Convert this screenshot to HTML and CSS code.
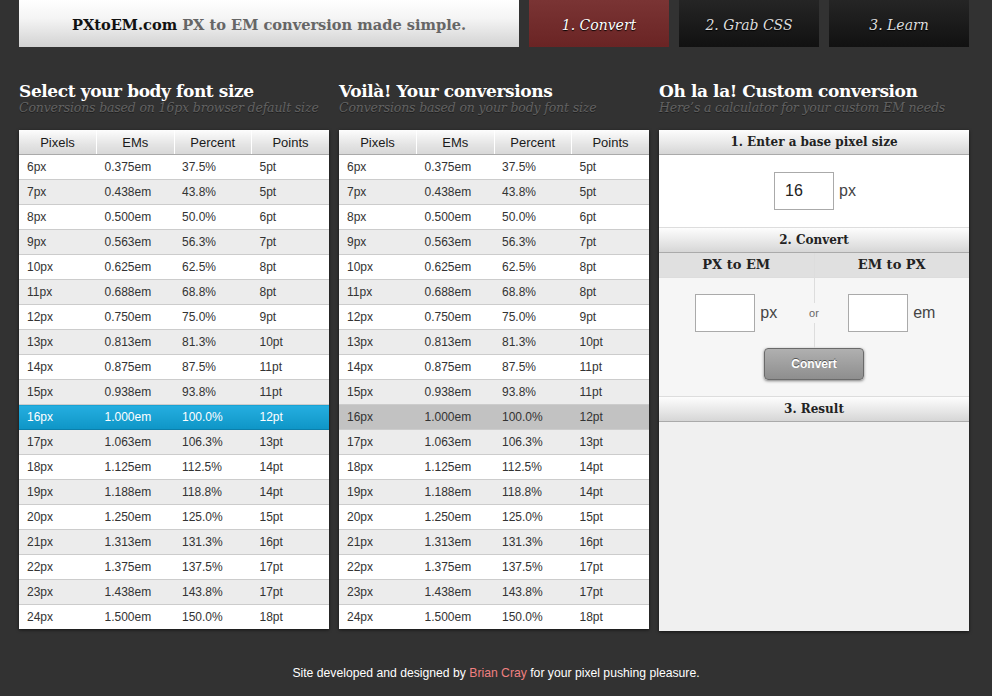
FILE: index.html
```html
<!DOCTYPE html>
<html>
<head>
<meta charset="utf-8">
<link rel="stylesheet" href="styles.css">
</head>
<body>
<div class="page">
  <div class="top">
    <div class="logo"><b>PXtoEM.com</b> <span>PX to EM conversion made simple.</span></div>
    <div class="tab active">1. Convert</div>
    <div class="tab">2. Grab CSS</div>
    <div class="tab">3. Learn</div>
  </div>
  <div class="cols">
    <div class="col">
      <h2>Select your body font size</h2>
      <p class="sub">Conversions based on 16px browser default size</p>
      <table class="conv">
        <thead><tr><th>Pixels</th><th>EMs</th><th>Percent</th><th>Points</th></tr></thead>
        <tbody id="t1"></tbody>
      </table>
    </div>
    <div class="col">
      <h2>Voilà! Your conversions</h2>
      <p class="sub">Conversions based on your body font size</p>
      <table class="conv">
        <thead><tr><th>Pixels</th><th>EMs</th><th>Percent</th><th>Points</th></tr></thead>
        <tbody id="t2"></tbody>
      </table>
    </div>
    <div class="col">
      <h2>Oh la la! Custom conversion</h2>
      <p class="sub">Here’s a calculator for your custom EM needs</p>
      <div class="calc">
        <div class="sec-h">1. Enter a base pixel size</div>
        <div class="base"><span class="inp big">16</span><span class="unit">px</span></div>
        <div class="sec-h">2. Convert</div>
        <div class="conv-area">
          <div class="halves">
            <div class="half">
              <div class="half-h">PX to EM</div>
              <div class="half-b"><span class="inp"></span><span class="unit">px</span></div>
            </div>
            <div class="half right">
              <div class="half-h">EM to PX</div>
              <div class="half-b"><span class="inp"></span><span class="unit">em</span></div>
            </div>
            <span class="or">or</span>
          </div>
          <div class="btn-row"><span class="btn">Convert</span></div>
        </div>
        <div class="sec-h">3. Result</div>
        <div class="result"></div>
      </div>
    </div>
  </div>
  <div class="footer">Site developed and designed by <a>Brian Cray</a> for your pixel pushing pleasure.</div>
</div>
<script src="app.js"></script>
</body>
</html>
```
FILE: app.js
```js
const rows = [
 ["6px","0.375em","37.5%","5pt"],["7px","0.438em","43.8%","5pt"],["8px","0.500em","50.0%","6pt"],
 ["9px","0.563em","56.3%","7pt"],["10px","0.625em","62.5%","8pt"],["11px","0.688em","68.8%","8pt"],
 ["12px","0.750em","75.0%","9pt"],["13px","0.813em","81.3%","10pt"],["14px","0.875em","87.5%","11pt"],
 ["15px","0.938em","93.8%","11pt"],["16px","1.000em","100.0%","12pt"],["17px","1.063em","106.3%","13pt"],
 ["18px","1.125em","112.5%","14pt"],["19px","1.188em","118.8%","14pt"],["20px","1.250em","125.0%","15pt"],
 ["21px","1.313em","131.3%","16pt"],["22px","1.375em","137.5%","17pt"],["23px","1.438em","143.8%","17pt"],
 ["24px","1.500em","150.0%","18pt"]
];
function fill(id, cls){
  const tb = document.getElementById(id);
  tb.innerHTML = rows.map(r => '<tr' + (r[0]==="16px" ? ' class="'+cls+'"' : '') + '>' + r.map(c => '<td>'+c+'</td>').join('') + '</tr>').join('');
}
fill('t1','sel');
fill('t2','cur');
```
FILE: styles.css
```css
html, body { margin: 0; padding: 0; }
body { background: #323232; font-family: "Liberation Sans", Arial, sans-serif; color: #333; }
.page { width: 950px; margin-left: 19px; }
.top { display: flex; gap: 10px; height: 47px; }
.logo {
  width: 500px; display: flex; align-items: center; justify-content: center; gap: 5px;
  background: linear-gradient(#ffffff, #f4f4f4 40%, #d2d2d2);
  font-family: "DejaVu Serif", Georgia, serif; font-size: 14.6px; font-weight: bold;
  padding-top: 2px; box-sizing: border-box;
}
.logo b { color: #111; }
.logo span { color: #666; }
.tab {
  width: 140px; display: flex; align-items: center; justify-content: center;
  background: linear-gradient(#252525, #111);
  color: #ddd; font-family: "DejaVu Serif", Georgia, serif; font-style: italic; font-size: 14px;
  text-shadow: 0 1px 1px #000; padding-top: 2px; box-sizing: border-box;
}
.tab.active { background: linear-gradient(#7a3434, #6a2424); color: #fff; }
.cols { display: flex; gap: 10px; margin-top: 34px; }
.col { width: 310px; }
h2 {
  margin: 0; font-family: "DejaVu Serif", Georgia, serif; font-weight: bold; font-size: 17px;
  color: #fff; line-height: 20px; letter-spacing: -0.4px;
}
.sub {
  margin: 0; font-family: "DejaVu Serif", Georgia, serif; font-style: italic; font-size: 12.5px;
  color: #626262; line-height: 14px; text-shadow: 0 1px 0 #1e1e1e; letter-spacing: -0.15px;
}
.conv {
  margin-top: 15px; width: 310px; border-collapse: collapse; table-layout: fixed;
  box-shadow: 0 1px 3px rgba(0,0,0,0.6); font-size: 12px;
}
.conv th {
  height: 24px; padding: 0; font-weight: normal; font-size: 13px; color: #1a1a1a;
  background: linear-gradient(#fdfdfd, #e4e4e4 60%, #d8d8d8);
  border-left: 1px solid #c8c8c8; border-right: 1px solid #fff; border-bottom: 1px solid #aaa;
}
.conv th:first-child { border-left: none; }
.conv th:last-child { border-right: none; }
.conv td {
  height: 24px; padding: 0 0 0 8px; color: #333; border-bottom: 1px solid #ccc;
}
.conv tbody tr:nth-child(odd) td { background: #fff; }
.conv tbody tr:nth-child(even) td { background: #ececec; }
.conv tbody tr:last-child td { border-bottom: none; }
.conv tbody tr.sel td { background: linear-gradient(#25aee0, #0e95c6); color: #fff; border-bottom-color: #0b7fab; }
.conv tbody tr.cur td { background: #c2c2c2; }
.calc {
  margin-top: 15px; height: 501px; background: #f6f6f6; box-shadow: 0 1px 3px rgba(0,0,0,0.6);
  display: flex; flex-direction: column;
}
.sec-h {
  height: 24px; line-height: 24px; text-align: center; font-family: "DejaVu Serif", Georgia, serif;
  font-weight: bold; font-size: 12px; color: #222;
  background: linear-gradient(#fdfdfd, #e6e6e6 60%, #d6d6d6);
  border-bottom: 1px solid #aaa; border-top: 1px solid #ddd;
}
.sec-h:first-child { border-top: none; }
.base {
  height: 72px; background: #fff; display: flex; align-items: center; justify-content: center; gap: 5px;
  padding-left: 2px;
}
.inp {
  display: inline-block; width: 58px; height: 36px; border: 1px solid #aaa; background: #fff;
  font-size: 16px; line-height: 36px; padding-left: 0; color: #222; text-indent: 10px;
}
.unit { font-size: 16px; color: #444; }
.conv-area { position: relative; height: 143px; background: #f6f6f6; }
.halves { display: flex; position: relative; }
.half { flex: 1; }
.half.right { border-left: 1px solid #ddd; }
.half-h {
  height: 24px; line-height: 24px; text-align: center; background: #e0e0e0; border-bottom: 1px solid #ddd;
  font-family: "DejaVu Serif", Georgia, serif; font-weight: bold; font-size: 13px; color: #222;
}
.half-b { height: 70px; display: flex; align-items: center; justify-content: center; gap: 5px; }
.half-b .inp { width: 58px; }
.or {
  position: absolute; left: 50%; top: 50px; transform: translateX(-50%);
  font-size: 11px; color: #666; background: #f6f6f6; padding: 4px 0;
}
.btn-row { display: flex; justify-content: center; }
.btn {
  width: 100px; height: 32px; line-height: 30px; text-align: center; box-sizing: border-box;
  border: 1px solid #6a6a6a; border-radius: 4px; background: linear-gradient(#b0b0b0, #8e8e8e);
  color: #fff; font-weight: bold; font-size: 12px; text-shadow: 0 -1px 0 #555;
  box-shadow: 0 1px 3px rgba(0,0,0,0.5);
}
.result { flex: 1; background: #f0f0f0; }
.footer { text-align: center; color: #fff; font-size: 12.2px; margin-top: 35px; margin-left: -19px; width: 992px; }
.footer a { color: #f08080; }
```
